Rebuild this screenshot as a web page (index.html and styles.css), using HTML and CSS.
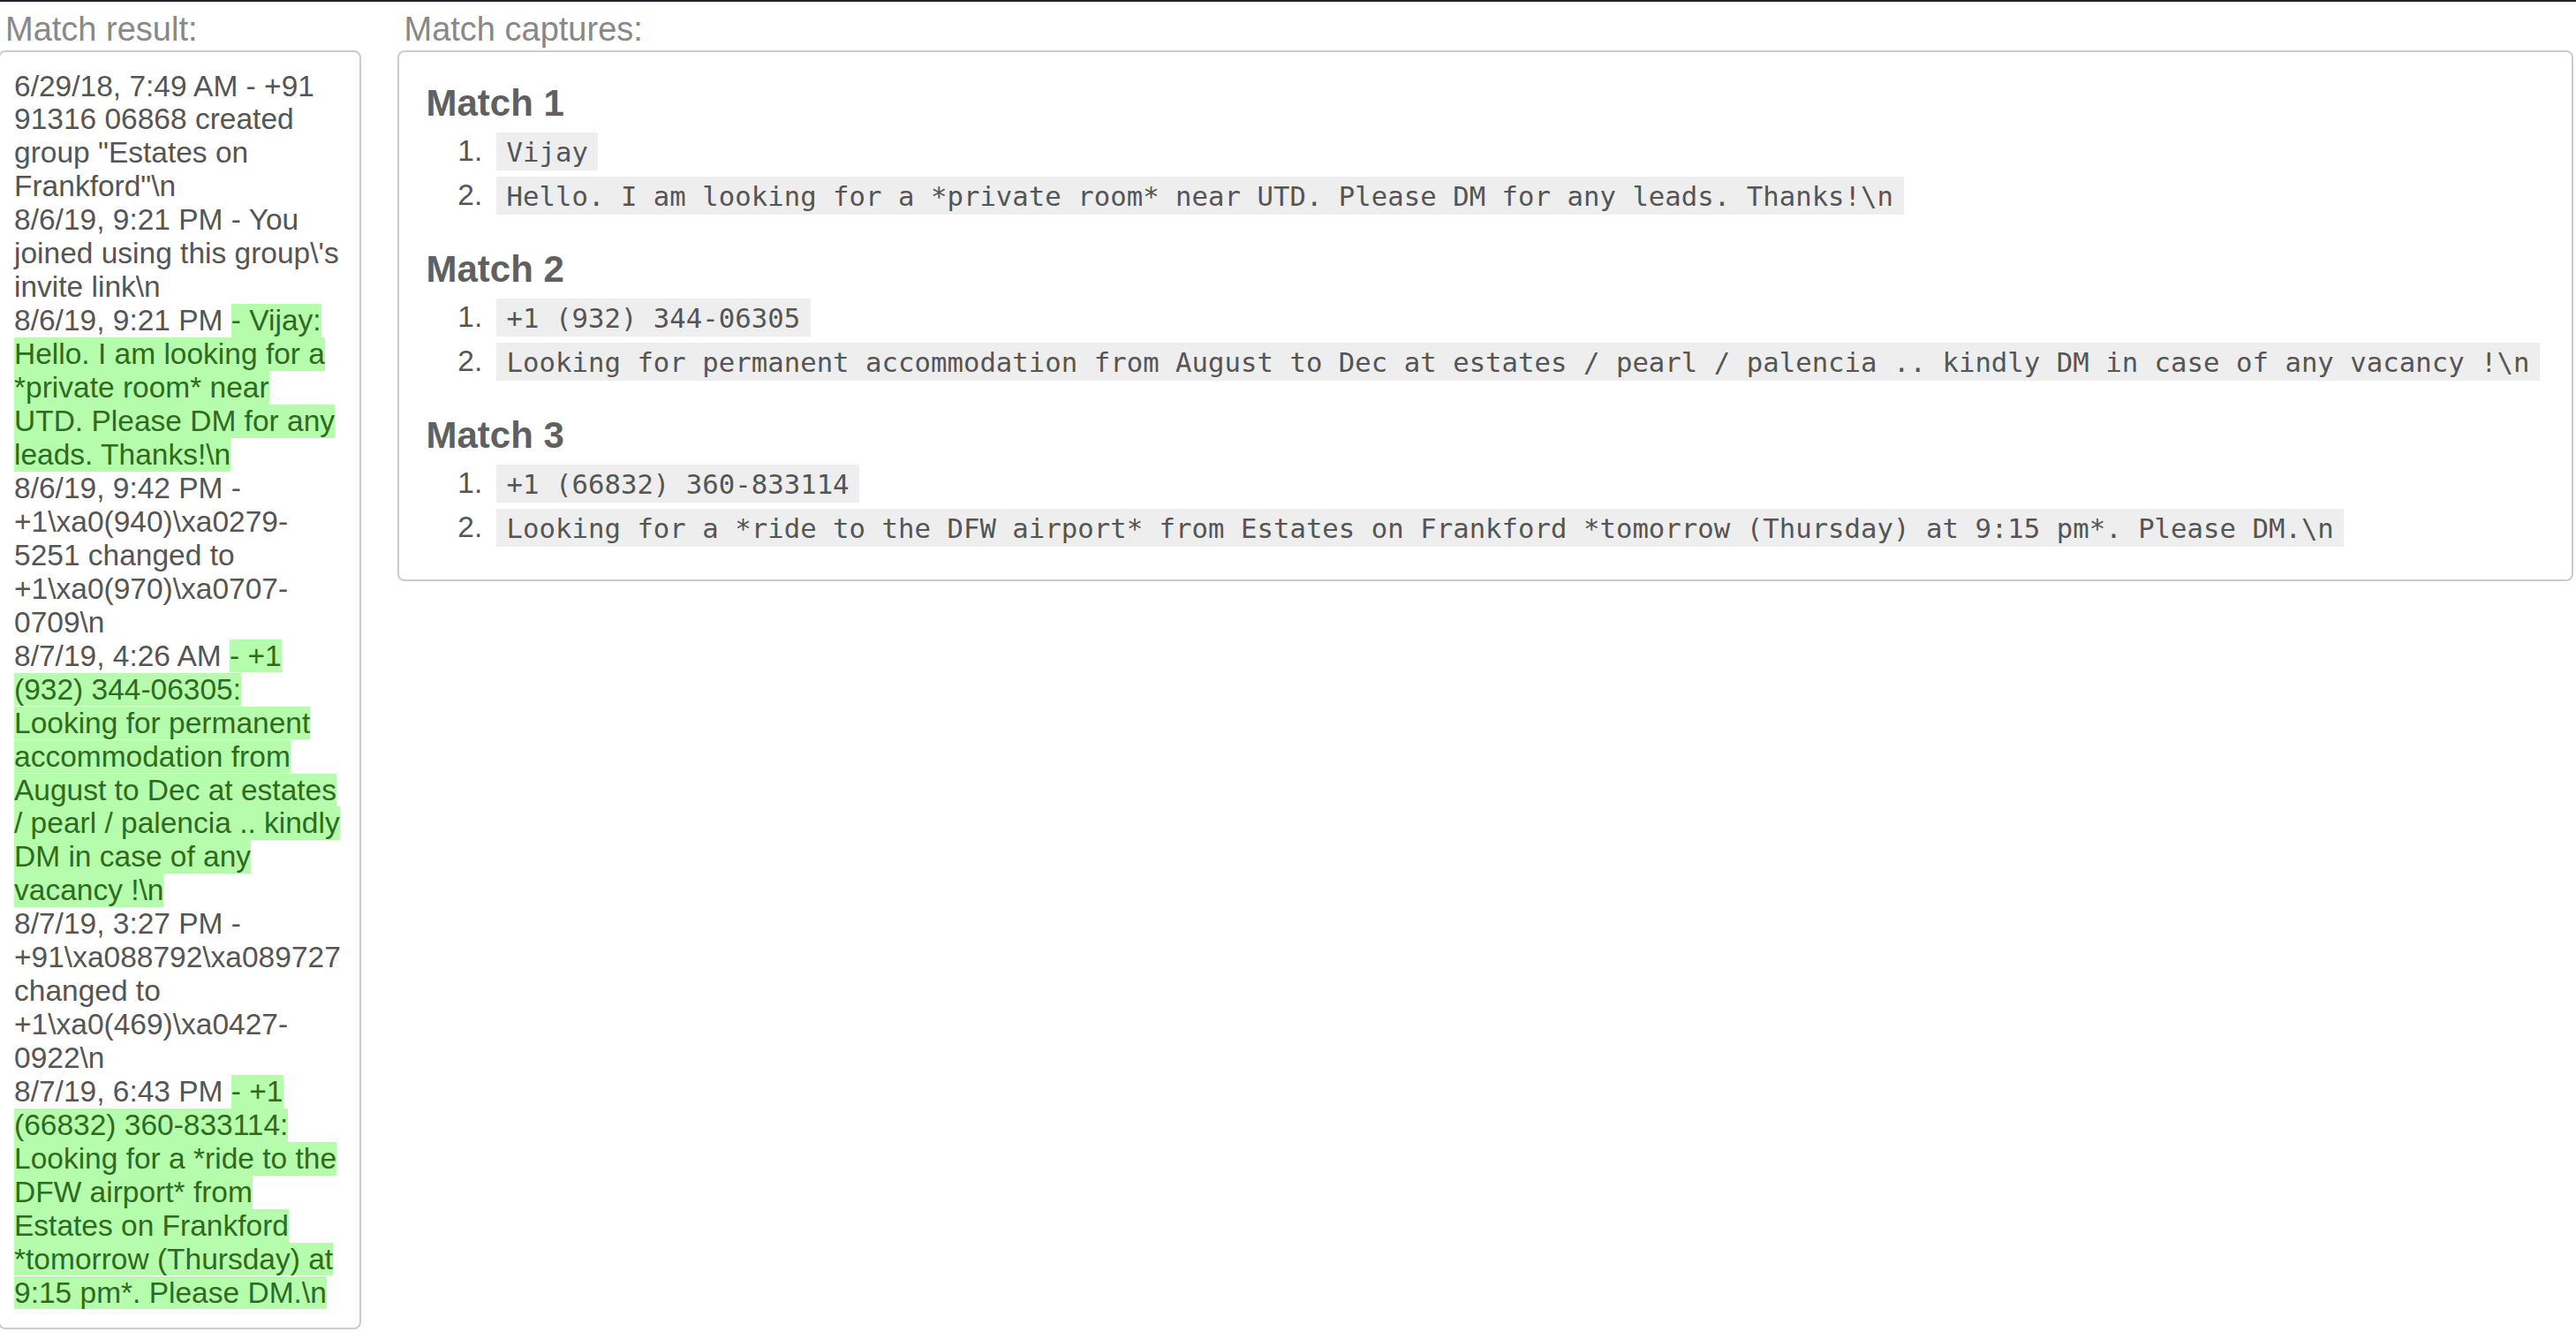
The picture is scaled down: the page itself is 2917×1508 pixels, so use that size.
FILE: index.html
```html
<!DOCTYPE html>
<html lang="en">
<head>
<meta charset="utf-8">
<title>Match result</title>
<link rel="stylesheet" href="styles.css">
</head>
<body>
<div class="page">
  <section class="col col-result">
    <div class="label">Match result:</div>
    <div class="box result">6/29/18, 7:49 AM - +91 91316 06868 created group "Estates on Frankford"\n<br>8/6/19, 9:21 PM - You joined using this group\'s invite link\n<br>8/6/19, 9:21 PM <mark class="hit">- Vijay: Hello. I am looking for a *private room* near UTD. Please DM for any leads. Thanks!\n</mark><br>8/6/19, 9:42 PM - +1\xa0(940)\xa0279-5251 changed to +1\xa0(970)\xa0707-0709\n<br>8/7/19, 4:26 AM <mark class="hit">- +1 (932) 344-06305: Looking for permanent accommodation from August to Dec at estates / pearl / palencia .. kindly DM in case of any vacancy !\n</mark><br>8/7/19, 3:27 PM - +91\xa088792\xa089727 changed to +1\xa0(469)\xa0427-0922\n<br>8/7/19, 6:43 PM <mark class="hit">- +1 (66832) 360-833114: Looking for a *ride to the DFW airport* from Estates on Frankford *tomorrow (Thursday) at 9:15 pm*. Please DM.\n</mark></div>
  </section>
  <section class="col col-captures">
    <div class="label">Match captures:</div>
    <div class="box captures">
      <div class="match">
        <h3 class="match-title">Match 1</h3>
        <ol class="groups">
          <li><code class="cap">Vijay</code></li>
          <li><code class="cap">Hello. I am looking for a *private room* near UTD. Please DM for any leads. Thanks!\n</code></li>
        </ol>
      </div>
      <div class="match">
        <h3 class="match-title">Match 2</h3>
        <ol class="groups">
          <li><code class="cap">+1 (932) 344-06305</code></li>
          <li><code class="cap">Looking for permanent accommodation from August to Dec at estates / pearl / palencia .. kindly DM in case of any vacancy !\n</code></li>
        </ol>
      </div>
      <div class="match">
        <h3 class="match-title">Match 3</h3>
        <ol class="groups">
          <li><code class="cap">+1 (66832) 360-833114</code></li>
          <li><code class="cap">Looking for a *ride to the DFW airport* from Estates on Frankford *tomorrow (Thursday) at 9:15 pm*. Please DM.\n</code></li>
        </ol>
      </div>
    </div>
  </section>
</div>
</body>
</html>
```

FILE: styles.css
```css
html, body {
  margin: 0;
  padding: 0;
  background: #ffffff;
}

body {
  border-top: 2px solid #1b2530;
  font-family: "Liberation Sans", Arial, sans-serif;
  color: #555555;
}

.page {
  display: flex;
  align-items: flex-start;
  gap: 40.5px;
  margin-left: -2px;
  margin-right: 3px;
}

.col-result {
  flex: 0 0 auto;
}

.col-captures {
  flex: 1 1 auto;
  min-width: 0;
}

.label {
  font-size: 38px;
  line-height: 43.7px;
  color: #888888;
  padding-left: 8px;
  margin-top: 10px;
  margin-bottom: 1.3px;
}

.box {
  border: 2px solid #cccccc;
  border-radius: 8px;
  background: #ffffff;
}

.result {
  width: 375px;
  padding: 19.5px 16px 20.5px;
  font-size: 33.5px;
  line-height: 37.95px;
  color: #555555;
  overflow-wrap: normal;
}

.hit {
  background: #b5fcac;
  color: #2f6b1f;
  padding: 0 0 0.6px;
}

.captures {
  padding: 34.4px 31px 33.6px;
}

.match + .match {
  margin-top: 35px;
}

.match-title {
  margin: 0;
  font-size: 42px;
  line-height: 48px;
  font-weight: bold;
  color: #606060;
}

.groups {
  margin: 5px 0 0;
  padding-left: 73px;
  font-size: 33.5px;
  line-height: 50px;
  color: #555555;
}

.cap {
  font-family: "DejaVu Sans Mono", "Liberation Mono", monospace;
  font-size: 30.7px;
  line-height: 1;
  white-space: pre;
  background: #eeeeee;
  color: #555555;
  padding: 4.5px 11.5px 3.8px;
  margin-left: 6.6px;
}
```
